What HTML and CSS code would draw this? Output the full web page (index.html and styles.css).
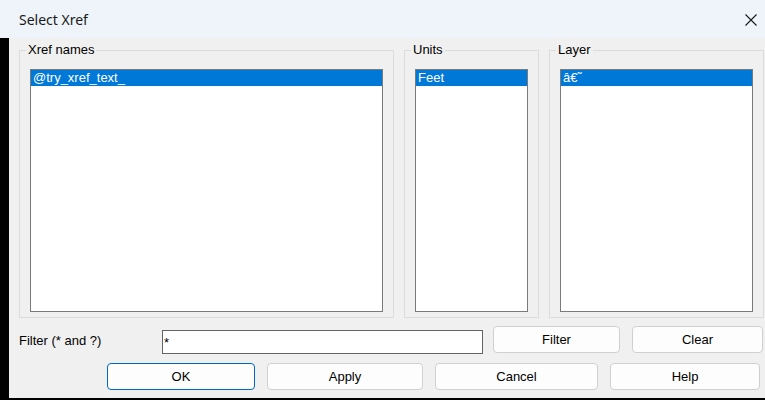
FILE: index.html
```html
<!DOCTYPE html>
<html lang="en">
<head>
    <meta charset="UTF-8">
    <title>Select Xref</title>
    <link rel="stylesheet" href="styles.css">
</head>
<body>
    <div class="titlebar">
        <span class="title">Select Xref</span>
        <svg class="close" width="12" height="12" viewBox="0 0 12 12">
            <path d="M0.5 0.5 L11.5 11.5 M11.5 0.5 L0.5 11.5" stroke="#1a1a1a" stroke-width="1.1" fill="none"/>
        </svg>
    </div>
    <div class="main">
        <div class="edge"></div>
        <div class="dialog">
            <div class="groups">
                <fieldset class="group">
                    <legend>Xref names</legend>
                    <div class="listbox">
                        <div class="item selected">@try_xref_text_</div>
                    </div>
                </fieldset>
                <fieldset class="group">
                    <legend>Units</legend>
                    <div class="listbox">
                        <div class="item selected">Feet</div>
                    </div>
                </fieldset>
                <fieldset class="group">
                    <legend>Layer</legend>
                    <div class="listbox">
                        <div class="item selected">â€˜</div>
                    </div>
                </fieldset>
            </div>
            <div class="filter-row">
                <label class="filter-label" for="filterInput">Filter (* and ?)</label>
                <input class="filter-input" id="filterInput" type="text" value="*">
                <button class="btn btn-filter">Filter</button>
                <button class="btn btn-clear">Clear</button>
            </div>
            <div class="action-row">
                <button class="btn btn-ok">OK</button>
                <button class="btn btn-apply">Apply</button>
                <button class="btn btn-cancel">Cancel</button>
                <button class="btn btn-help">Help</button>
            </div>
        </div>
    </div>
</body>
</html>
```

FILE: styles.css
```css
* {
    box-sizing: border-box;
}
body {
    margin: 0;
    width: 765px;
    height: 400px;
    overflow: hidden;
    font-family: 'Liberation Sans', Arial, sans-serif;
    font-size: 13px;
    color: #000;
    background-color: #f0f0f0;
}
.titlebar {
    height: 38px;
    background-color: #eef4f9;
    display: flex;
    align-items: center;
    justify-content: space-between;
    padding: 0 8px 0 19px;
}
.title {
    font-family: 'Noto Sans', 'Open Sans', sans-serif;
    font-size: 14px;
    color: #1a1a1a;
}
.close {
    display: block;
    margin-top: 1px;
}
.main {
    display: flex;
    height: 362px;
}
.edge {
    flex: none;
    width: 9px;
    background-color: #000;
}
.dialog {
    flex: 1;
    min-width: 0;
    background-color: #f0f0f0;
    border-bottom: 2px solid #000;
    padding: 4px 1px 0 10px;
}
.groups {
    display: grid;
    grid-template-columns: 375px 135px 215px;
    gap: 10px;
}
.group {
    margin: 0;
    border: 1px solid #dcdcdc;
    padding: 11px 10px 5px 10px;
    min-width: 0;
}
.group legend {
    padding: 0 2px;
    margin-left: -4px;
    line-height: 16px;
    color: #000;
}
.listbox {
    height: 243px;
    background-color: #fff;
    border: 1px solid #7a7a7a;
}
.item {
    height: 16px;
    line-height: 16px;
    padding-left: 2px;
    white-space: nowrap;
}
.item.selected {
    background-color: #0078d7;
    color: #fff;
}
.filter-row {
    display: flex;
    align-items: flex-start;
    margin-top: 8px;
}
.filter-label {
    width: 143px;
    line-height: 27px;
    padding-top: 1px;
}
.filter-input {
    width: 321px;
    height: 24px;
    margin-top: 4px;
    border: 1px solid #646464;
    background-color: #fff;
    font-family: 'Liberation Sans', Arial, sans-serif;
    font-size: 13px;
    padding: 0 1px;
    outline: none;
}
.btn {
    height: 27px;
    font-family: 'Liberation Sans', Arial, sans-serif;
    font-size: 13px;
    color: #000;
    background-color: #fdfdfd;
    border: 1px solid #d0d0d0;
    border-radius: 4px;
    padding: 0;
}
.btn-filter {
    width: 127px;
    margin-left: 10px;
}
.btn-clear {
    width: 131px;
    margin-left: 12px;
}
.action-row {
    display: flex;
    gap: 12px;
    margin-top: 9px;
    padding-left: 88px;
}
.btn-ok {
    width: 148px;
    border-color: #0067c0;
}
.btn-apply {
    width: 156px;
}
.btn-cancel {
    width: 163px;
}
.btn-help {
    width: 150px;
}
```
